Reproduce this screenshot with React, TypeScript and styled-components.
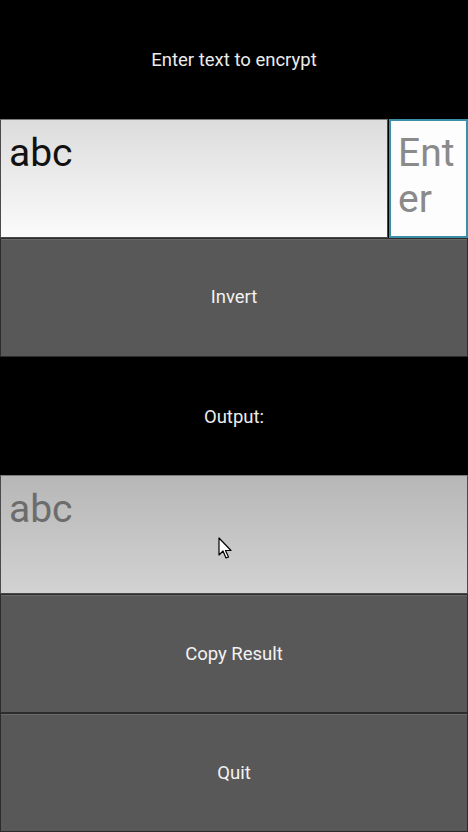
import { createGlobalStyle, styled } from 'styled-components';

const GlobalStyle = createGlobalStyle`
 html, body {
  margin: 0;
  padding: 0;
  background: #000;
 }
 body {
  font-family: Roboto, 'Liberation Sans', sans-serif;
 }
`;

export default function App() {
 return (
  <>
   <GlobalStyle />
   <Screen>
    <Caption>Enter text to encrypt</Caption>

    <InputRow>
     <TextBox readOnly value="abc" />
     <TextBox placeholder="Enter" $focused />
    </InputRow>

    <Button>Invert</Button>

    <Caption>Output:</Caption>

    <TextBox readOnly value="abc" $disabled />

    <Button>Copy Result</Button>
    <Button>Quit</Button>

    {/* mouse pointer caught in the screenshot */}
    <Pointer width="16" height="24" viewBox="0 0 16 24">
     <path
      d="M1 1 L1 18 L5 14 L8 21 L10.5 20 L7.5 13.5 L13 13.5 Z"
      fill="#fff"
      stroke="#000"
      strokeWidth="1.2"
      strokeLinejoin="round"
     />
    </Pointer>
   </Screen>
  </>
 );
}

const Screen = styled.div`
 position: relative;
 display: grid;
 grid-template-rows: repeat(7, 1fr);
 width: 468px;
 height: 832px;
 background: #000;
 overflow: hidden;
`;

const Caption = styled.div`
 display: flex;
 align-items: center;
 justify-content: center;
 padding-top: 2px;
 font-size: 18.5px;
 color: #ececec;
`;

const InputRow = styled.div`
 display: grid;
 grid-template-columns: 388px 1fr;
 gap: 1px;
 min-height: 0;
`;

const TextBox = styled.textarea<{ $focused?: boolean; $disabled?: boolean }>`
 box-sizing: border-box;
 width: 100%;
 height: 100%;
 margin: 0;
 padding: ${(p) => (p.$focused ? '9px 4px 0 7px' : '10px 6px 0 8px')};
 resize: none;
 overflow: hidden;
 outline: none;
 font-family: Roboto, 'Liberation Sans', sans-serif;
 font-size: 39px;
 line-height: 46px;
 word-break: break-all;
 border: ${(p) => (p.$focused ? '2px solid #3c8fa6' : '1px solid #4a4a4a')};
 border-top-color: ${(p) => (p.$focused ? '#3c8fa6' : '#7a7a7a')};
 color: ${(p) => (p.$disabled ? '#6c6c6c' : '#111')};
 background: ${(p) =>
  p.$focused
   ? '#fdfdfd'
   : p.$disabled
   ? 'linear-gradient(#b7b7b7, #d2d2d2)'
   : 'linear-gradient(#dcdcdc, #fbfbfb)'};

 &::placeholder {
  color: #8a8a8a;
 }
`;

const Button = styled.button`
 box-sizing: border-box;
 width: 100%;
 height: 100%;
 margin: 0;
 padding: 0;
 border: 1px solid #2c2c2c;
 box-shadow: inset 0 1px 0 #6a6a6a;
 background: #585858;
 color: #f2f2f2;
 font-family: Roboto, 'Liberation Sans', sans-serif;
 font-size: 18.5px;
`;

const Pointer = styled.svg`
 position: absolute;
 left: 218px;
 top: 537px;
 pointer-events: none;
`;
